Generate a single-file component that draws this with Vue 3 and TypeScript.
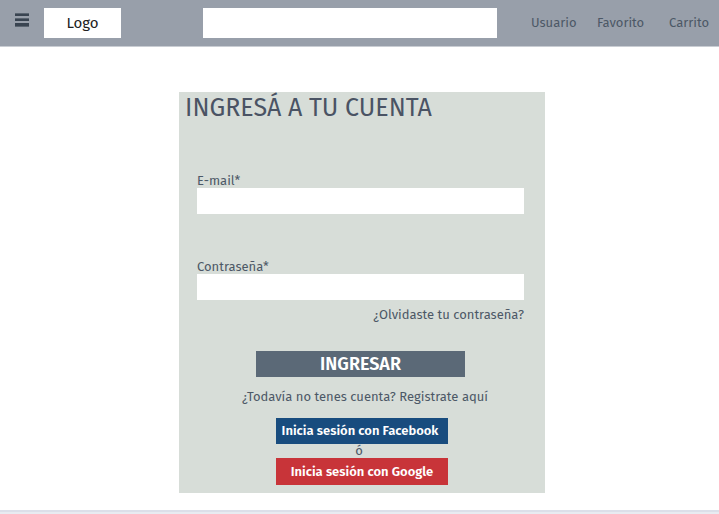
<script setup lang="ts">
import { ref } from 'vue'

const search = ref('')
const email = ref('')
const password = ref('')
const links: string[] = ['Usuario', 'Favorito', 'Carrito']
</script>

<template>
  <div class="page">
    <header class="bar">
      <button class="menu" type="button" aria-label="Menú">
        <svg viewBox="0 0 14 14" width="14" height="14" aria-hidden="true">
          <path d="M0 0h14v3H0zM0 5h14v3H0zM0 10h14v3H0z" fill="#394451" />
          <path d="M0 0h14v1H0zM0 5h14v1H0zM0 13h14v1H0z" fill="#5b6571" />
        </svg>
      </button>
      <a class="logo" href="#">Logo</a>
      <input v-model="search" class="search" type="search" aria-label="Buscar" />
      <nav class="links">
        <a v-for="link in links" :key="link" href="#">{{ link }}</a>
      </nav>
    </header>

    <main class="main">
      <form class="card" @submit.prevent>
        <h1 class="title">INGRESÁ A TU CUENTA</h1>
        <div class="fields">
          <div class="field">
            <label for="email">E-mail*</label>
            <input id="email" v-model="email" type="email" />
          </div>
          <div class="field">
            <label for="password">Contraseña*</label>
            <input id="password" v-model="password" type="password" />
          </div>
          <a class="forgot" href="#">¿Olvidaste tu contraseña?</a>
          <button class="submit" type="submit">INGRESAR</button>
        </div>
        <a class="register" href="#">¿Todavía no tenes cuenta? Registrate aquí</a>
        <div class="social">
          <button class="facebook" type="button">Inicia sesión con Facebook</button>
          <span class="or">ó</span>
          <button class="google" type="button">Inicia sesión con Google</button>
        </div>
      </form>
    </main>
    <footer class="footer"></footer>
  </div>
</template>

<style>
body {
  margin: 0;
  background: #fff;
}
</style>

<style scoped>
.page {
  display: flex;
  flex-direction: column;
  min-height: 100vh;
  font-family: 'Fira Sans', 'Noto Sans', sans-serif;
  font-size: 13px;
  line-height: 14px;
  color: #4c5866;
}
* {
  box-sizing: border-box;
}
a {
  color: inherit;
  text-decoration: none;
  white-space: nowrap;
}
button,
input {
  margin: 0;
  padding: 0;
  border: 0;
  border-radius: 0;
  font: inherit;
}
input {
  background: #fff;
  appearance: none;
}
.bar {
  display: flex;
  align-items: center;
  padding: 8px 10px 8px 15px;
  background: #989faa;
  border-bottom: 1px solid #c9cdd3;
}
.menu {
  display: flex;
  margin: 0 15px 6px 0;
  background: none;
}
.logo {
  width: 77px;
  background: #fff;
  color: #222;
  font-size: 15px;
  line-height: 30px;
  text-align: center;
}
.search {
  flex: 1;
  min-width: 0;
  height: 30px;
  margin: 0 34px 0 82px;
  padding: 0 8px;
}
.links {
  display: grid;
  grid-template-columns: 46px 52px 40px;
  gap: 20px;
}
.main {
  flex: 1;
  padding: 45px 0 17px 5px;
}
.card {
  display: flex;
  flex-direction: column;
  max-width: 366px;
  margin: 0 auto;
  padding-bottom: 8px;
  background: #d7ddd8;
}
.title {
  margin: 0 0 50px;
  padding-left: 6px;
  font-size: 25px;
  font-weight: 400;
  line-height: 32px;
  color: #4a5364;
}
.fields {
  display: flex;
  flex-direction: column;
  padding: 0 21px 0 18px;
}
.field {
  display: flex;
  flex-direction: column;
  margin-bottom: 46px;
}
.field + .field {
  margin-bottom: 8px;
}
.field input {
  height: 26px;
  padding: 0 6px;
}
.forgot {
  align-self: flex-end;
}
.submit {
  width: 209px;
  height: 26px;
  margin: 29px auto 0;
  background: #5b6977;
  color: #fff;
  font-size: 18px;
  font-weight: 600;
}
.register {
  margin: 13px 0 14px;
  padding-left: 6px;
  text-align: center;
}
.social {
  display: flex;
  flex-direction: column;
  width: 172px;
  margin: 0 auto;
}
.social button {
  height: 26px;
  color: #fff;
  font-size: 13px;
  font-weight: 600;
  white-space: nowrap;
}
.social .facebook {
  padding-right: 4px;
  background: #184c7e;
}
.social .google {
  height: 27px;
  background: #c83439;
}
.or {
  padding-right: 6px;
  text-align: center;
}
.footer {
  height: 4px;
  background: #e8ebf1;
  border-top: 2px solid #dcdfe9;
}
</style>
